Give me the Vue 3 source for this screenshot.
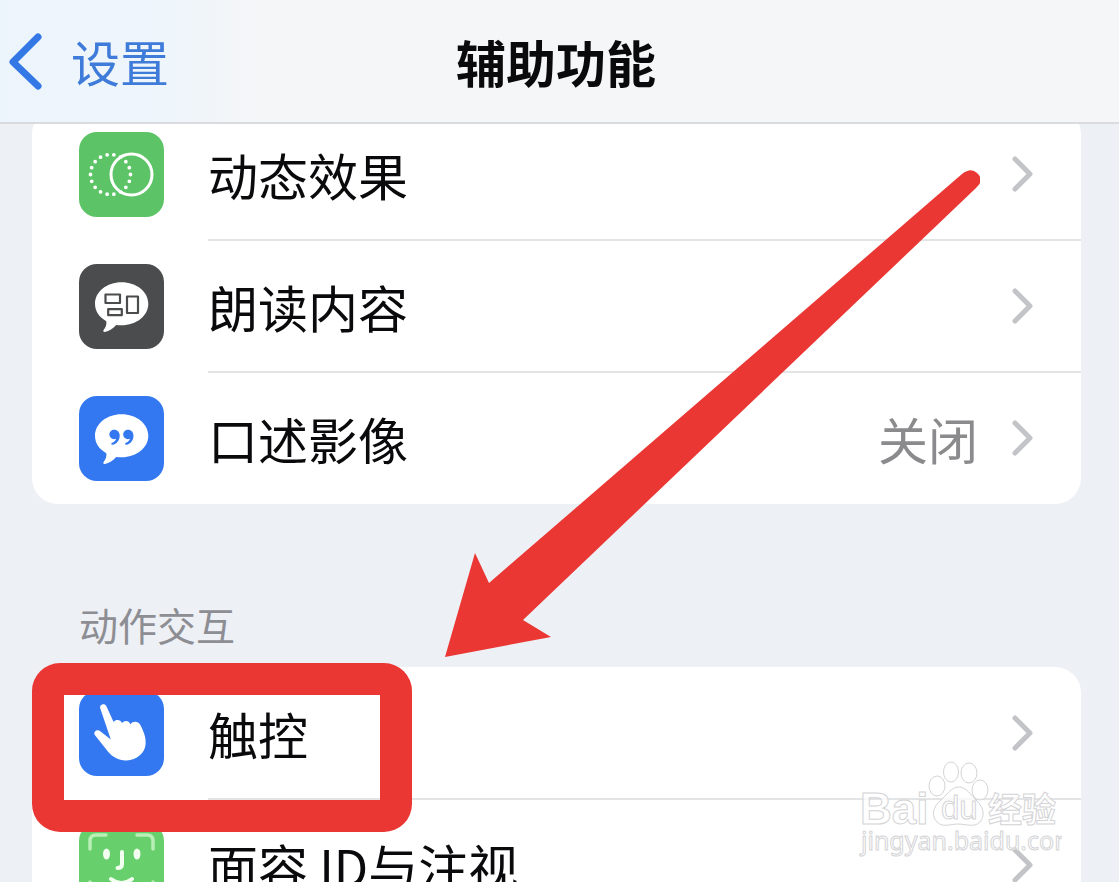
<script setup>
const visionRows = [
  { id: 'motion', label: '动态效果', value: '' },
  { id: 'spoken', label: '朗读内容', value: '' },
  { id: 'audio', label: '口述影像', value: '关闭' },
]
const actionRows = [
  { id: 'touch', label: '触控', marked: true },
  { id: 'face', label: '面容 ID与注视' },
]
</script>

<template>
  <div class="page">
    <header class="bar">
      <a class="back" href="#settings">
        <svg width="34" height="58" viewBox="0 0 34 58" fill="none" stroke="#3478e5" stroke-width="7" stroke-linecap="round" stroke-linejoin="round" aria-hidden="true">
          <path d="M29 5L4 30L29 54" />
        </svg>
        <span>设置</span>
      </a>
      <h1 class="title">辅助功能</h1>
    </header>

    <main class="content">
      <ul class="card first">
        <li v-for="row in visionRows" :key="row.id" class="item">
          <a class="row" :href="'#' + row.id">
            <svg class="icon" viewBox="0 0 85 85" aria-hidden="true">
              <template v-if="row.id === 'motion'">
                <rect width="85" height="85" rx="18" fill="#5cc466" />
                <circle cx="31.5" cy="42.5" r="20" fill="none" stroke="#fff" stroke-width="3.8" stroke-linecap="round" pathLength="18" stroke-dasharray="0 1" />
                <circle cx="52.5" cy="42.5" r="20.5" fill="none" stroke="#fff" stroke-width="3" />
              </template>
              <template v-else-if="row.id === 'spoken'">
                <rect width="85" height="85" rx="18" fill="#4a4c4d" />
                <path d="M42.5 18.3C57.5 18.3 69.3 27.8 69.3 39.8S57.5 61.3 42.5 61.3C40.6 61.3 38.8 61.2 37.2 60.9C34 64.5 30.3 67 25.8 68C24.3 68.2 23.8 66.8 24.8 65.7C26.8 63.2 27.8 60.5 27.3 57.2C20.2 53.4 16 47 16 39.8C16 27.8 27.8 18.3 42.5 18.3Z" fill="#fff" />
                <g fill="none" stroke="#4a4c4d" stroke-width="2.2" stroke-linejoin="round">
                  <rect x="26.5" y="30.5" width="14.5" height="8.5" />
                  <rect x="29.2" y="45.2" width="13.6" height="6" />
                  <rect x="48" y="32.5" width="11" height="16.5" />
                </g>
              </template>
              <template v-else>
                <rect width="85" height="85" rx="18" fill="#3478f1" />
                <path d="M42.5 18.3C57.5 18.3 69.3 27.8 69.3 39.8S57.5 61.3 42.5 61.3C40.6 61.3 38.8 61.2 37.2 60.9C34 64.5 30.3 67 25.8 68C24.3 68.2 23.8 66.8 24.8 65.7C26.8 63.2 27.8 60.5 27.3 57.2C20.2 53.4 16 47 16 39.8C16 27.8 27.8 18.3 42.5 18.3Z" fill="#fff" />
                <g fill="#3478f1">
                  <path d="M35.2 33.8C38.5 33.8 40.7 36.4 40.7 39.8C40.7 44.6 37.5 48.2 33.6 48.8C32 48.9 31.8 47.3 33.2 46.7C35.4 45.8 36.7 44.5 37.1 42.8C33.7 44.2 30.4 41.9 30.4 38.6C30.4 35.9 32.5 33.8 35.2 33.8Z" />
                  <path d="M49 33.8C52.3 33.8 54.5 36.4 54.5 39.8C54.5 44.6 51.3 48.2 47.4 48.8C45.8 48.9 45.6 47.3 47 46.7C49.2 45.8 50.5 44.5 50.9 42.8C47.5 44.2 44.2 41.9 44.2 38.6C44.2 35.9 46.3 33.8 49 33.8Z" />
                </g>
              </template>
            </svg>
            <span class="label">{{ row.label }}</span>
            <span v-if="row.value" class="value">{{ row.value }}</span>
            <svg class="chevron" viewBox="0 0 22 36" aria-hidden="true"><path d="M3 3L18 18L3 33" /></svg>
          </a>
        </li>
      </ul>

      <h2 class="section">动作交互</h2>

      <ul class="card">
        <li v-for="row in actionRows" :key="row.id" class="item">
          <a class="row" :href="'#' + row.id">
            <svg class="icon" viewBox="0 0 85 85" aria-hidden="true">
              <template v-if="row.id === 'touch'">
                <rect width="85" height="85" rx="18" fill="#3478f1" />
                <path d="M21.2 17.2C20.2 13.6 25.6 11.6 27.3 15L34.6 31C37 27.8 41.6 28.6 43 32C45.6 28.8 50 29.3 51.4 33.3C54.5 29.6 59.6 30.2 61.6 34.6C64.8 40.8 67.2 46.8 66.6 53.5C65.6 62.5 58 68.8 47.5 69.4C40 69.7 33.8 66.2 29.3 61L16.2 44.6C13.4 40.8 18 37.4 21.6 40.4L31.8 48.4Z" fill="#fff" />
              </template>
              <template v-else>
                <rect width="85" height="85" rx="18" fill="#67cf6b" />
                <g fill="none" stroke-linecap="round" stroke-linejoin="round">
                  <g stroke="#b9efb6" stroke-width="3.5">
                    <path d="M11 26V18Q11 12 17 12H27" />
                    <path d="M58 12H68Q74 12 74 18V26" />
                    <path d="M11 59V67Q11 73 17 73H27" />
                    <path d="M58 73H68Q74 73 74 67V59" />
                  </g>
                  <path d="M43 29V41Q43 45 38.500 45" stroke="#f2fff0" stroke-width="4" />
                  <path d="M32 56Q42.500 64 53 56" stroke="#f2fff0" stroke-width="4" />
                </g>
                <ellipse cx="27.500" cy="31" rx="3.500" ry="5.500" fill="#f2fff0" />
                <ellipse cx="58" cy="31" rx="3.500" ry="5.500" fill="#f2fff0" />
              </template>
            </svg>
            <span class="label">{{ row.label }}</span>
            <svg class="chevron" viewBox="0 0 22 36" aria-hidden="true"><path d="M3 3L18 18L3 33" /></svg>
          </a>
          <span v-if="row.marked" class="marker"></span>
        </li>
      </ul>
    </main>

    <svg class="arrow" width="540" height="490" viewBox="0 0 540 490" aria-hidden="true">
      <path d="M5 487L35 383L49 413L522 4Q531 -3 537 3Q545 10 536 18L83 450L111 467Z" transform="translate(0 0)" fill="#eb3734" />
    </svg>

    <svg class="watermark" width="210" height="104" viewBox="0 0 210 104" role="img" aria-label="Baidu 经验">
      <g class="ink">
        <text x="8" y="66" class="brand">Bai</text>
        <ellipse cx="85" cy="28" rx="8" ry="10" />
        <ellipse cx="99" cy="14" rx="7.500" ry="10" />
        <ellipse cx="117" cy="15" rx="8" ry="10" />
        <ellipse cx="128" cy="32" rx="8" ry="10" />
        <path d="M107 29C114 29 119 37 125 43C132 50 133 58 128 64C122 70 114 66 106 66C98 66 91 70 85 64C79 58 81 49 88 43C95 37 99 29 107 29Z" />
        <text x="89" y="61" class="du">du</text>
        <text x="136" y="64" class="cn">经验</text>
        <text x="9" y="92" class="site">jingyan.baidu.com</text>
      </g>
    </svg>
  </div>
</template>

<style scoped>
.page {
  position: relative;
  display: flex;
  flex-direction: column;
  height: 100vh;
  overflow: hidden;
  background: #edf0f5;
  color: #0a0a0c;
  font-family: "Noto Sans CJK SC", sans-serif;
  font-size: 50px;
  line-height: 60px;
}

.bar {
  position: relative;
  z-index: 1;
  flex: none;
  display: grid;
  grid-template-columns: 1fr auto 1fr;
  align-items: center;
  height: 122px;
  padding: 0 16px 4px 9px;
  box-sizing: content-box;
  padding-bottom: 0;
  border-bottom: 2px solid #d9dbde;
  background: linear-gradient(90deg, #edf5fc 0, #eef5fb 170px, #f5f6f8 260px);
}

.back {
  display: flex;
  align-items: center;
  gap: 28px;
  color: #3f7bd9;
  font-size: 49px;
  text-decoration: none;
}

.title {
  margin: 0;
  font-size: 50px;
  font-weight: 700;
}

.content {
  flex: 1;
  min-height: 0;
  padding: 0 38px 0 32px;
}

.card {
  margin: 0;
  padding: 0;
  list-style: none;
  border-radius: 26px;
  background: #fff;
}

.first {
  margin-top: -16px;
}

.item {
  position: relative;
}

.item + .item::before {
  content: "";
  position: absolute;
  top: -1px;
  left: 176px;
  right: 0;
  height: 2px;
  background: #e3e4e6;
}

.row {
  display: flex;
  align-items: center;
  height: 132px;
  padding: 0 47px;
  color: inherit;
  text-decoration: none;
}

.icon {
  flex: none;
  width: 85px;
  height: 85px;
}

.label {
  flex: 1;
  margin-left: 44px;
}

.value {
  margin-right: 34px;
  color: #8b8b8e;
}

.chevron {
  flex: none;
  width: 22px;
  height: 36px;
  fill: none;
  stroke: #c3c4c7;
  stroke-width: 5;
  stroke-linecap: round;
  stroke-linejoin: round;
}

.section {
  margin: 90px 0 12px;
  padding-left: 47px;
  color: #8d8e93;
  font-size: 39px;
  font-weight: 400;
  line-height: 61px;
}

.marker {
  position: absolute;
  z-index: 1;
  top: -4px;
  left: 0;
  width: 316px;
  height: 105px;
  border: 32px solid #eb3734;
  border-radius: 28px;
}

.arrow {
  position: absolute;
  z-index: 2;
  top: 170px;
  left: 440px;
}

.watermark {
  position: absolute;
  z-index: 2;
  right: 57px;
  bottom: 20px;
}

.ink {
  fill: #fff;
  fill-opacity: 0.75;
  stroke: #d4d4d6;
  stroke-width: 1;
}

.brand {
  font: 700 44px "Liberation Sans", sans-serif;
}

.du {
  font: 400 33px "Liberation Sans", sans-serif;
}

.cn {
  font: 700 34px "Noto Sans CJK SC", sans-serif;
}

.site {
  font: 400 25px "Noto Sans", sans-serif;
}
</style>

<style>
body {
  margin: 0;
}
</style>
